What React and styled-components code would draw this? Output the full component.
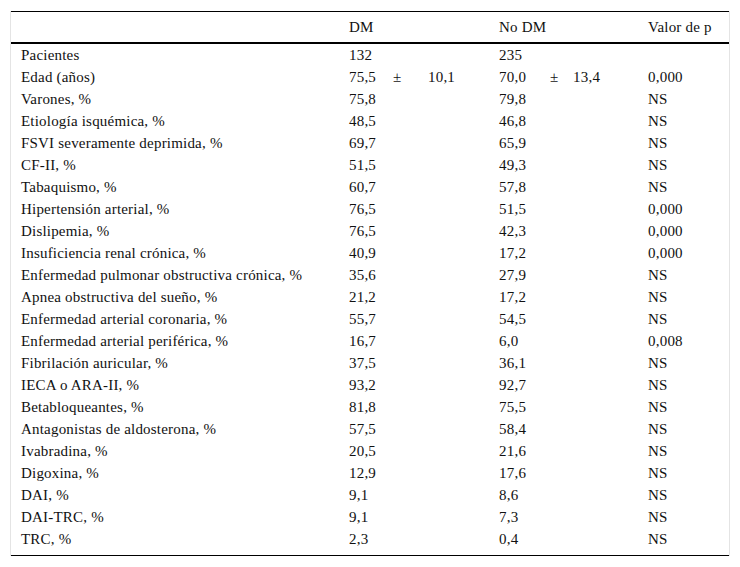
import styled, { createGlobalStyle } from "styled-components";

const GlobalStyle = createGlobalStyle`
    body {
        margin: 0;
        background: #ffffff;
        font-family: "Liberation Serif", "Times New Roman", serif;
        color: #000000;
    }
`;

const Page = styled.div`
    padding: 11px 0 0 10px;
`;

const Frame = styled.div`
    width: 718px;
    border-left: 1px solid #e4e4e4;
    border-right: 1px solid #e4e4e4;
`;

const Table = styled.table`
    width: 718px;
    border-collapse: collapse;
    table-layout: fixed;
    font-family: "Liberation Serif", "Times New Roman", serif;
    font-size: 15px;
    letter-spacing: 0.2px;
    color: #111111;
    border-top: 1px solid #000000;
    border-bottom: 1px solid #000000;
`;

const HeadCell = styled.th`
    height: 30px;
    padding: 0 0 0 10px;
    text-align: left;
    font-weight: normal;
    border-bottom: 2px solid #000000;
    vertical-align: middle;
`;

const Row = styled.tr`
    height: 22px;
`;

const Cell = styled.td`
    padding: 0 0 0 10px;
    text-align: left;
    white-space: nowrap;
    vertical-align: middle;
    line-height: 22px;
`;

const Spacer = styled.tr`
    height: 5px;
`;

const rows = [
    ["Pacientes", "132", "", "", "235", "", "", ""],
    ["Edad (años)", "75,5", "±", "10,1", "70,0", "±", "13,4", "0,000"],
    ["Varones, %", "75,8", "", "", "79,8", "", "", "NS"],
    ["Etiología isquémica, %", "48,5", "", "", "46,8", "", "", "NS"],
    ["FSVI severamente deprimida, %", "69,7", "", "", "65,9", "", "", "NS"],
    ["CF-II, %", "51,5", "", "", "49,3", "", "", "NS"],
    ["Tabaquismo, %", "60,7", "", "", "57,8", "", "", "NS"],
    ["Hipertensión arterial, %", "76,5", "", "", "51,5", "", "", "0,000"],
    ["Dislipemia, %", "76,5", "", "", "42,3", "", "", "0,000"],
    ["Insuficiencia renal crónica, %", "40,9", "", "", "17,2", "", "", "0,000"],
    ["Enfermedad pulmonar obstructiva crónica, %", "35,6", "", "", "27,9", "", "", "NS"],
    ["Apnea obstructiva del sueño, %", "21,2", "", "", "17,2", "", "", "NS"],
    ["Enfermedad arterial coronaria, %", "55,7", "", "", "54,5", "", "", "NS"],
    ["Enfermedad arterial periférica, %", "16,7", "", "", "6,0", "", "", "0,008"],
    ["Fibrilación auricular, %", "37,5", "", "", "36,1", "", "", "NS"],
    ["IECA o ARA-II, %", "93,2", "", "", "92,7", "", "", "NS"],
    ["Betabloqueantes, %", "81,8", "", "", "75,5", "", "", "NS"],
    ["Antagonistas de aldosterona, %", "57,5", "", "", "58,4", "", "", "NS"],
    ["Ivabradina, %", "20,5", "", "", "21,6", "", "", "NS"],
    ["Digoxina, %", "12,9", "", "", "17,6", "", "", "NS"],
    ["DAI, %", "9,1", "", "", "8,6", "", "", "NS"],
    ["DAI-TRC, %", "9,1", "", "", "7,3", "", "", "NS"],
    ["TRC, %", "2,3", "", "", "0,4", "", "", "NS"],
];

const widths = [328, 44, 35, 71, 51, 23, 75, 91];

const App = () => {
    return (
        <Page>
            <GlobalStyle />
            <Frame>
                <Table>
                    <colgroup>
                        {widths.map((w, i) => (
                            <col key={i} style={{ width: w }} />
                        ))}
                    </colgroup>
                    <thead>
                        <tr>
                            <HeadCell></HeadCell>
                            <HeadCell colSpan={3}>DM</HeadCell>
                            <HeadCell colSpan={3}>No DM</HeadCell>
                            <HeadCell>Valor de p</HeadCell>
                        </tr>
                    </thead>
                    <tbody>
                        {rows.map((r) => (
                            <Row key={r[0]}>
                                {r.map((v, i) => (
                                    <Cell key={i}>{v}</Cell>
                                ))}
                            </Row>
                        ))}
                        <Spacer>
                            <td colSpan={8}></td>
                        </Spacer>
                    </tbody>
                </Table>
            </Frame>
        </Page>
    );
};

export default App;
